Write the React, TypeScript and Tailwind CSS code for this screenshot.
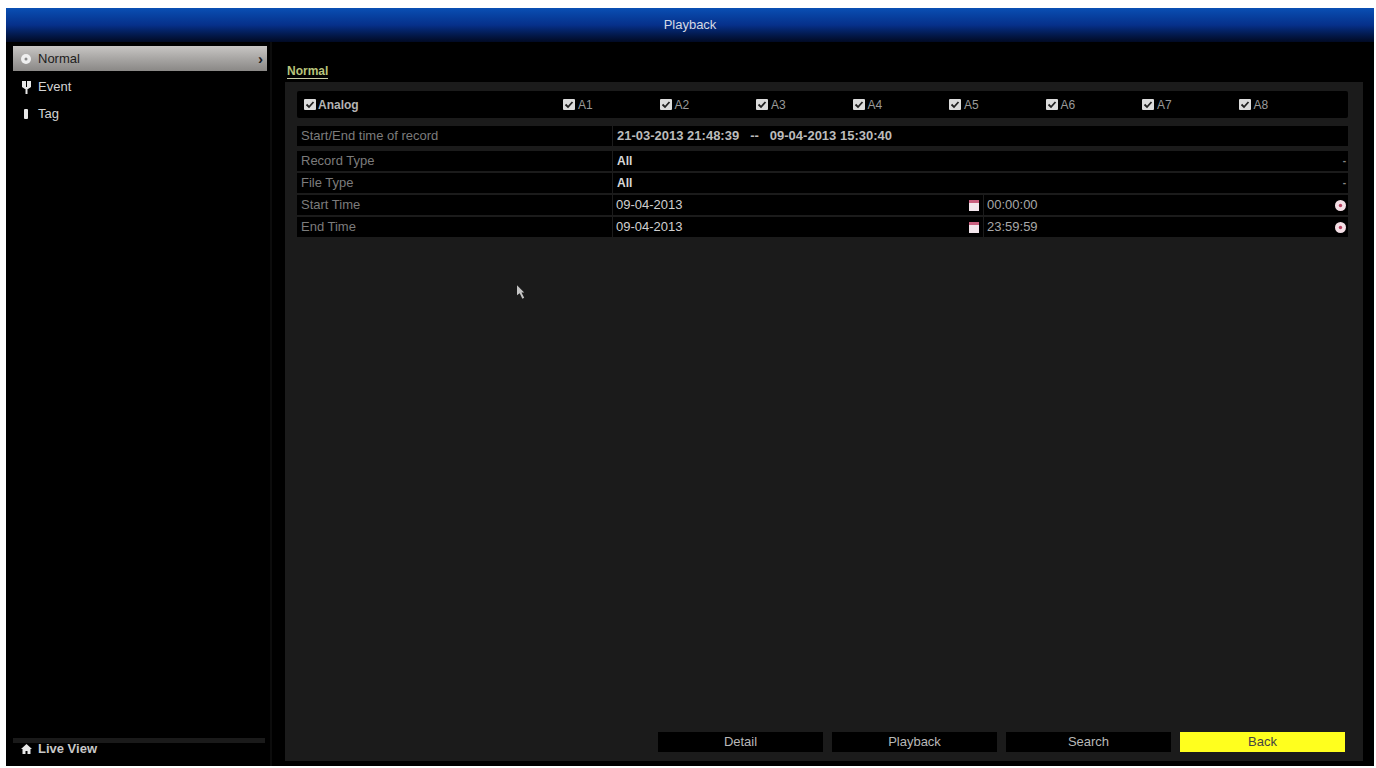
import React from 'react';

const channels = ['A1', 'A2', 'A3', 'A4', 'A5', 'A6', 'A7', 'A8'];

const font = { fontFamily: '"Liberation Sans", Arial, sans-serif' };

const Check = () => (
  <svg width="12" height="11" viewBox="0 0 12 11" className="shrink-0">
    <rect width="12" height="11" rx="1" fill="#dcdcdc" />
    <path d="M2.5 5.5 L5 8 L9.5 3" stroke="#222" strokeWidth="1.8" fill="none" />
  </svg>
);

const CalendarIcon = () => (
  <svg width="10" height="11" viewBox="0 0 10 11" className="shrink-0">
    <rect width="10" height="11" fill="#f3e6ec" />
    <rect width="10" height="3" fill="#c9607f" />
  </svg>
);

const ClockIcon = () => (
  <svg width="11" height="11" viewBox="0 0 11 11" className="shrink-0">
    <circle cx="5.5" cy="5.5" r="5.5" fill="#f4dfe6" />
    <circle cx="5.5" cy="5.5" r="1.7" fill="#b8405f" />
  </svg>
);

const FormRow = ({ label, children }: { label: string; children: React.ReactNode }) => (
  <div className="flex h-[20px] items-center bg-black">
    <div className="w-[315px] shrink-0 pl-[4px] text-[13px] text-[#7c7c7c]">{label}</div>
    <div className="h-full w-px shrink-0 bg-[#1c1c1c]" />
    <div className="flex h-full min-w-0 flex-1 items-center">{children}</div>
  </div>
);

const DateTimeCells = ({ date, time }: { date: string; time: string }) => (
  <>
    <div className="flex h-full w-[370px] shrink-0 items-center justify-between pl-[3px] pr-[4px] text-[13px] text-[#d0d0d0]">
      <span>{date}</span>
      <CalendarIcon />
    </div>
    <div className="h-full w-px shrink-0 bg-[#1c1c1c]" />
    <div className="flex h-full flex-1 items-center justify-between pl-[3px] pr-[2px] text-[13px] text-[#a8a8a8]">
      <span>{time}</span>
      <ClockIcon />
    </div>
  </>
);

const SelectValue = ({ value }: { value: string }) => (
  <div className="flex h-full w-full items-center justify-between pl-[4px] pr-[2px] text-[12px] font-bold text-[#d8d8d8]">
    <span>{value}</span>
    <span className="text-[10px] leading-none text-[#888]">-</span>
  </div>
);

const ActionButton = ({ label, primary }: { label: string; primary?: boolean }) => (
  <button
    className={`flex h-[20px] w-[165px] items-center justify-center text-[13px] ${
      primary ? 'bg-[#ffff1e] text-[#444]' : 'bg-black text-[#b8b8b8]'
    }`}
  >
    {label}
  </button>
);

export default function App() {
  return (
    <div className="h-[768px] w-[1376px] overflow-hidden bg-white pb-[2px] pl-[6px] pr-[2px] pt-[8px]" style={font}>
      <div className="flex h-full flex-col bg-black">
        {/* Title bar */}
        <header className="flex h-[34px] shrink-0 items-center justify-center bg-gradient-to-b from-[#0a4fb4] via-[#06308a] to-[#010a24] text-[13px] text-[#d5d9e4]">
          Playback
        </header>

        <div className="flex min-h-0 flex-1">
          {/* Sidebar */}
          <aside className="flex w-[279px] shrink-0 pr-[13px]">
            <div className="flex flex-1 flex-col border-r-[2px] border-[#0c0c0c] pl-[7px] pt-[4px]">
              <div className="flex h-[25px] w-[254px] items-center bg-gradient-to-b from-[#c8c6c4] via-[#a8a6a4] to-[#8a8886] pl-[8px] pr-[4px] text-[13px] text-[#1c1c1c]">
                <svg width="10" height="10" viewBox="0 0 10 10" className="mr-[7px] shrink-0">
                  <circle cx="5" cy="5" r="5" fill="#efefef" />
                  <circle cx="5" cy="5" r="1.5" fill="#8a8a8a" />
                </svg>
                <span className="flex-1">Normal</span>
                <span className="text-[15px] font-bold leading-none">›</span>
              </div>
              <div className="mt-[5px] flex h-[22px] items-center pl-[9px] text-[13px] text-[#d4d4d4]">
                <svg width="9" height="13" viewBox="0 0 9 13" className="mr-[7px] shrink-0">
                  <path d="M0 0 H4 V6 H5 V0 H9 V6 L6 8 H5.5 V13 H3.5 V8 H3 L0 6 Z" fill="#e8e8e8" />
                </svg>
                Event
              </div>
              <div className="mt-[5px] flex h-[22px] items-center pl-[11px] text-[13px] text-[#d4d4d4]">
                <svg width="4" height="10" viewBox="0 0 4 10" className="mr-[10px] shrink-0">
                  <rect width="4" height="10" rx="1" fill="#e8e8e8" />
                </svg>
                Tag
              </div>
              <div className="mt-auto w-[252px] border-t-[5px] border-[#1a1a1a] pb-[11px] pl-[8px]">
                <div className="flex h-[12px] items-center text-[13px] font-bold text-[#c8c8c8]">
                  <svg width="11" height="10" viewBox="0 0 11 10" className="mr-[6px] shrink-0">
                    <path d="M5.5 0 L11 5 H9.5 V10 H6.5 V7 H4.5 V10 H1.5 V5 H0 Z" fill="#e8e8e8" />
                  </svg>
                  Live View
                </div>
              </div>
            </div>
          </aside>

          {/* Main */}
          <main className="flex min-w-0 flex-1 flex-col pb-[5px] pr-[11px] pt-[23px]">
            <div className="flex h-[17px] shrink-0 items-start pl-[2px]">
              <span className="block border-b border-[#c8cca8] text-[12px] font-bold leading-[13px] text-[#b9c47c]">
                Normal
              </span>
            </div>
            <div className="flex min-h-0 flex-1 flex-col bg-[#1b1b1b] pb-[9px] pl-[12px] pr-[15px] pt-[9px]">
              {/* Channels */}
              <div className="grid h-[27px] shrink-0 grid-cols-[259px_repeat(8,96.5px)] items-center rounded-[2px] bg-black pl-[7px] text-[12px] text-[#9a9a9a]">
                <label className="flex items-center gap-[2px] font-bold text-[#b4b4b4]">
                  <Check />
                  Analog
                </label>
                {channels.map((c) => (
                  <label key={c} className="flex items-center gap-[3px]">
                    <Check />
                    {c}
                  </label>
                ))}
              </div>

              {/* Record range */}
              <div className="mt-[8px] shrink-0">
                <FormRow label="Start/End time of record">
                  <div className="flex gap-[11px] pl-[4px] text-[13px] font-bold text-[#bcbcbc]">
                    <span>21-03-2013 21:48:39</span>
                    <span>--</span>
                    <span>09-04-2013 15:30:40</span>
                  </div>
                </FormRow>
              </div>

              {/* Search fields */}
              <div className="mt-[5px] flex shrink-0 flex-col gap-[2px]">
                <FormRow label="Record Type">
                  <SelectValue value="All" />
                </FormRow>
                <FormRow label="File Type">
                  <SelectValue value="All" />
                </FormRow>
                <FormRow label="Start Time">
                  <DateTimeCells date="09-04-2013" time="00:00:00" />
                </FormRow>
                <FormRow label="End Time">
                  <DateTimeCells date="09-04-2013" time="23:59:59" />
                </FormRow>
              </div>

              {/* Actions */}
              <div className="mt-auto flex shrink-0 justify-end gap-[9px] pr-[3px]">
                <ActionButton label="Detail" />
                <ActionButton label="Playback" />
                <ActionButton label="Search" />
                <ActionButton label="Back" primary />
              </div>
            </div>
          </main>
        </div>
      </div>

      {/* Mouse pointer */}
      <svg width="9" height="14" viewBox="0 0 10 15" className="absolute left-[517px] top-[285px]">
        <path d="M0 0 L8 8 L5 8 L8 14 L6 15 L3 9 L0 11 Z" fill="#c4c4c4" />
      </svg>
    </div>
  );
}
